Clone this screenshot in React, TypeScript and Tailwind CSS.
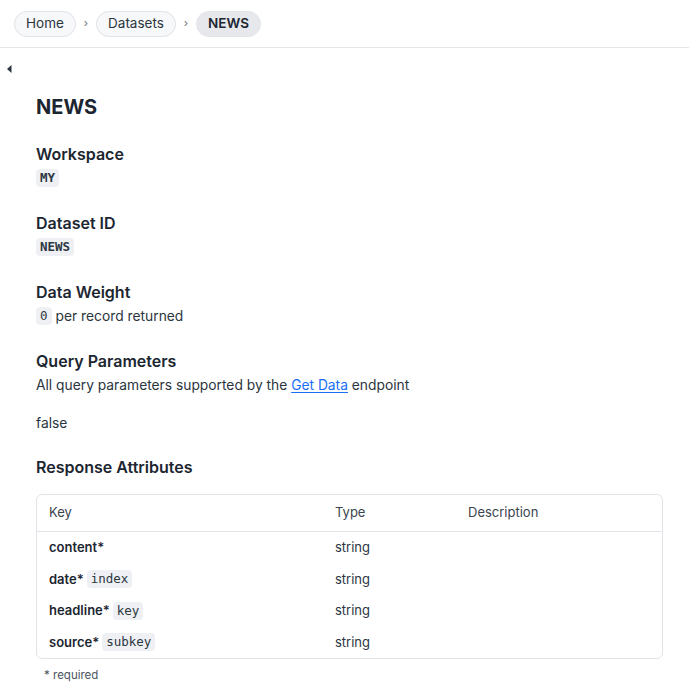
import React from 'react';

const SANS = 'font-["Inter","Noto_Sans",sans-serif]';

function Code({ children, bold = false }: { children: React.ReactNode; bold?: boolean }) {
  return (
    <code
      className={`inline-block rounded-[4px] bg-[#eef0f3] px-[4px] font-["DejaVu_Sans_Mono","Liberation_Mono",monospace] text-[12.5px] leading-[18px] text-[#2c3742] ${
        bold ? 'font-bold' : 'font-normal'
      }`}
    >
      {children}
    </code>
  );
}

function Crumb({ label, current = false }: { label: string; current?: boolean }) {
  return (
    <span
      className={`inline-flex h-[26px] items-center rounded-full border px-[11px] text-[13.5px] ${
        current
          ? 'border-[#e3e5ea] bg-[#e6e8ec] font-semibold text-[#1c2631]'
          : 'border-[#dfe2e8] bg-[#f7f8fa] text-[#2b3540]'
      }`}
    >
      {label}
    </span>
  );
}

function Section({ title, children }: { title: string; children: React.ReactNode }) {
  return (
    <div>
      <h3 className="text-[16px] font-semibold leading-6 text-[#1c2631]">{title}</h3>
      <div className="mt-[2px] flex h-5 items-center text-[13.8px] text-[#2b3540]">{children}</div>
    </div>
  );
}

const rows = [
  { key: 'content', tag: null as string | null, type: 'string' },
  { key: 'date', tag: 'index', type: 'string' },
  { key: 'headline', tag: 'key', type: 'string' },
  { key: 'source', tag: 'subkey', type: 'string' },
];

export default function App() {
  return (
    <div className={`${SANS} min-h-[687px] w-full bg-white text-[#2b3540]`}>
      {/* breadcrumbs */}
      <nav className="flex h-[48px] items-center gap-[8px] border-b border-[#e3e5ea] px-[14px]">
        <Crumb label="Home" />
        <span className="text-[11px] text-[#6b7480]">›</span>
        <Crumb label="Datasets" />
        <span className="text-[11px] text-[#6b7480]">›</span>
        <Crumb label="NEWS" current />
      </nav>

      {/* collapse caret */}
      <div className="flex h-[24px] items-end pl-[7px]">
        <svg width="5" height="8" viewBox="0 0 5 8" className="mb-[-1px]">
          <path d="M4.5 0 L0 4 L4.5 8 Z" fill="#2b3540" />
        </svg>
      </div>

      <main className="pl-9 pr-[26px] pt-[21px]">
        <h1 className="text-[20px] font-bold leading-7 text-[#1c2631]">NEWS</h1>

        <div className="mt-[21px] flex flex-col gap-[23px]">
          <Section title="Workspace">
            <Code bold>MY</Code>
          </Section>
          <Section title="Dataset ID">
            <Code bold>NEWS</Code>
          </Section>
          <Section title="Data Weight">
            <Code>0</Code>
            <span className="ml-[4px]">per record returned</span>
          </Section>
          <div>
            <Section title="Query Parameters">
              <span>
                All query parameters supported by the{' '}
                <a href="#" className="text-[#1a6ef5] underline underline-offset-2">
                  Get Data
                </a>{' '}
                endpoint
              </span>
            </Section>
            <p className="mt-[18px] h-5 text-[13.8px] leading-5">false</p>
          </div>
        </div>

        <h3 className="mt-[22px] text-[16px] font-semibold leading-6 text-[#1c2631]">Response Attributes</h3>

        <div className="mt-[15px] overflow-hidden rounded-[6px] border border-[#e0e3e8]">
          <div className="flex h-[37px] items-center border-b border-[#e0e3e8] text-[13px] text-[#3a444f]">
            <div className="w-[286px] px-3">Key</div>
            <div className="w-[133px] px-3">Type</div>
            <div className="flex-1 px-3">Description</div>
          </div>
          {rows.map((r) => (
            <div key={r.key} className="flex h-[31.5px] items-center text-[13px] text-[#2b3540]">
              <div className="flex w-[286px] items-center gap-[3px] px-3">
                <span className="font-semibold text-[#1c2631]">{r.key}*</span>
                {r.tag && <Code>{r.tag}</Code>}
              </div>
              <div className="w-[133px] px-3">{r.type}</div>
              <div className="flex-1 px-3" />
            </div>
          ))}
        </div>

        <p className="mt-[8px] pl-2 text-[11.5px] text-[#4a545f]">* required</p>
      </main>
    </div>
  );
}
